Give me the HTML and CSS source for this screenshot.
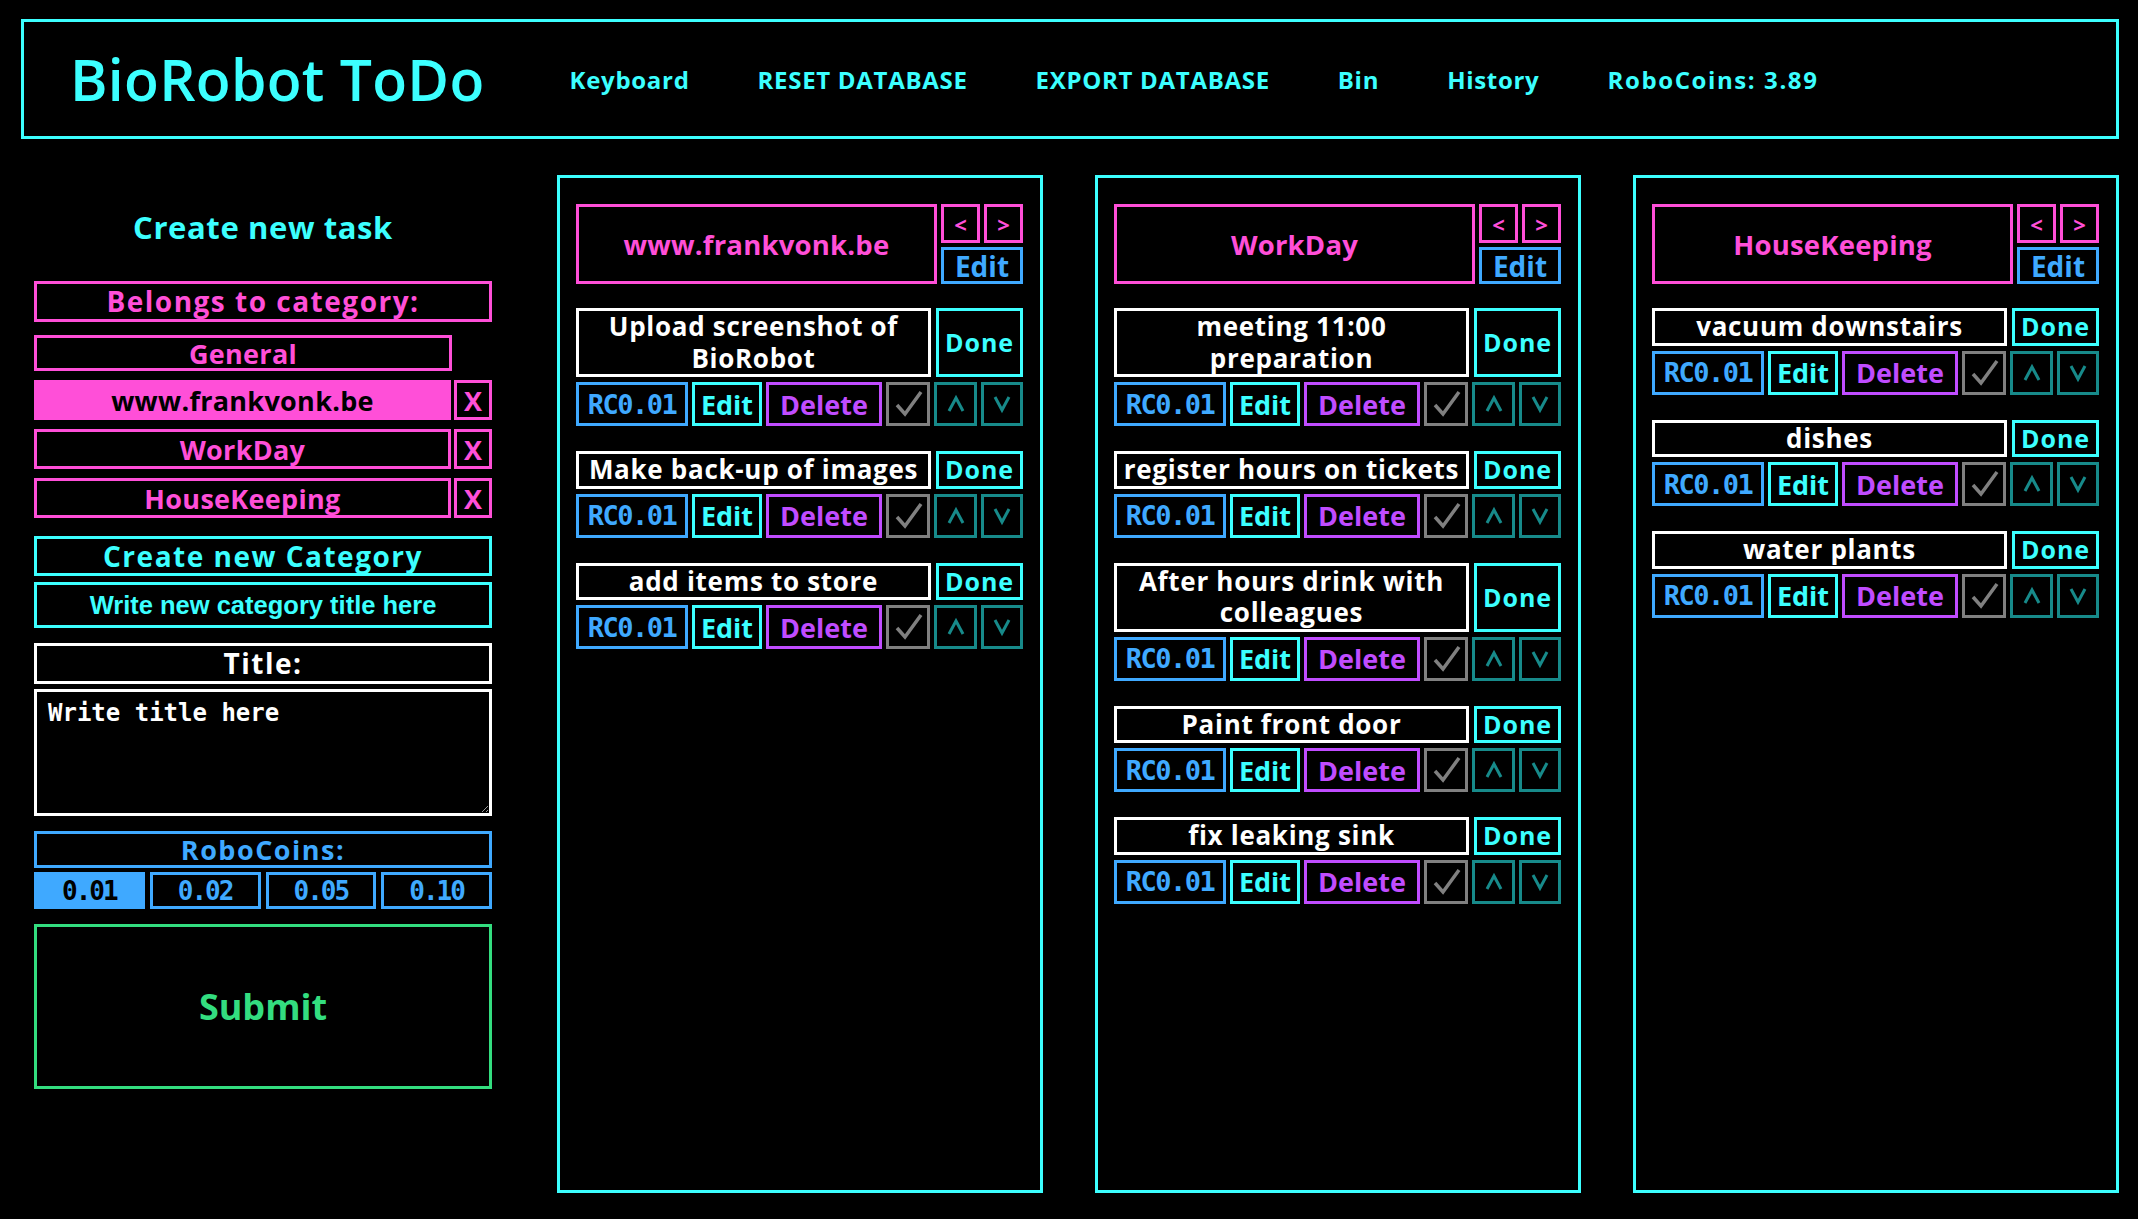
FILE: index.html
```html
<!DOCTYPE html>
<html lang="en">
<head>
  <meta charset="UTF-8">
  <meta name="viewport" content="width=device-width, initial-scale=1.0">
  <title>BioRobot ToDo</title>
  <link rel="stylesheet" href="styles.css">
</head>
<body>
  <header class="topbar">
    <h1 class="logo">BioRobot ToDo</h1>
    <nav class="menu">
      <a href="#">Keyboard</a>
      <a href="#">RESET DATABASE</a>
      <a href="#">EXPORT DATABASE</a>
      <a href="#">Bin</a>
      <a href="#">History</a>
      <a href="#" class="coinTotal">RoboCoins: 3.89</a>
    </nav>
  </header>

  <main class="board">
    <aside class="sidebar">
      <h2 class="sidebarTitle">Create new task</h2>
      <div class="boxLabel pink">Belongs to category:</div>

      <div class="catList">
        <div class="catRow general">
          <button class="catBtn">General</button>
        </div>
        <div class="catRow">
          <button class="catBtn selected">www.frankvonk.be</button>
          <button class="catX">X</button>
        </div>
        <div class="catRow">
          <button class="catBtn">WorkDay</button>
          <button class="catX">X</button>
        </div>
        <div class="catRow">
          <button class="catBtn">HouseKeeping</button>
          <button class="catX">X</button>
        </div>
      </div>

      <button class="boxLabel cyan newCat">Create new Category</button>
      <input type="text" class="catInput" placeholder="Write new category title here">

      <div class="boxLabel white titleLabel">Title:</div>
      <textarea class="titleInput" placeholder="Write title here"></textarea>

      <div class="boxLabel blue coinLabel">RoboCoins:</div>
      <div class="coins">
        <button class="coin selected">0.01</button>
        <button class="coin">0.02</button>
        <button class="coin">0.05</button>
        <button class="coin">0.10</button>
      </div>

      <button class="submit">Submit</button>
    </aside>

    <!-- category 1 -->
    <section class="column">
      <div class="colHead">
        <div class="colTitle">www.frankvonk.be</div>
        <div class="colCtrl">
          <button class="arrow">&lt;</button>
          <button class="arrow">&gt;</button>
          <button class="colEdit">Edit</button>
        </div>
      </div>

      <div class="task">
        <div class="taskTop">
          <div class="taskTitle">Upload screenshot of BioRobot</div>
          <button class="done">Done</button>
        </div>
        <div class="taskActions">
          <button class="rc">RC0.01</button>
          <button class="edit">Edit</button>
          <button class="delete">Delete</button>
          <button class="check"><svg viewBox="0 0 38 38"><polyline points="8,20 16,29 32,7"/></svg></button>
          <button class="move up"><svg viewBox="0 0 37 38"><polyline points="12,26 19,13 26,26"/></svg></button>
          <button class="move down"><svg viewBox="0 0 34 38"><polyline points="10,12 17,25 24,12"/></svg></button>
        </div>
      </div>

      <div class="task">
        <div class="taskTop">
          <div class="taskTitle">Make back-up of images</div>
          <button class="done">Done</button>
        </div>
        <div class="taskActions">
          <button class="rc">RC0.01</button>
          <button class="edit">Edit</button>
          <button class="delete">Delete</button>
          <button class="check"><svg viewBox="0 0 38 38"><polyline points="8,20 16,29 32,7"/></svg></button>
          <button class="move up"><svg viewBox="0 0 37 38"><polyline points="12,26 19,13 26,26"/></svg></button>
          <button class="move down"><svg viewBox="0 0 34 38"><polyline points="10,12 17,25 24,12"/></svg></button>
        </div>
      </div>

      <div class="task">
        <div class="taskTop">
          <div class="taskTitle">add items to store</div>
          <button class="done">Done</button>
        </div>
        <div class="taskActions">
          <button class="rc">RC0.01</button>
          <button class="edit">Edit</button>
          <button class="delete">Delete</button>
          <button class="check"><svg viewBox="0 0 38 38"><polyline points="8,20 16,29 32,7"/></svg></button>
          <button class="move up"><svg viewBox="0 0 37 38"><polyline points="12,26 19,13 26,26"/></svg></button>
          <button class="move down"><svg viewBox="0 0 34 38"><polyline points="10,12 17,25 24,12"/></svg></button>
        </div>
      </div>
    </section>

    <!-- category 2 -->
    <section class="column">
      <div class="colHead">
        <div class="colTitle">WorkDay</div>
        <div class="colCtrl">
          <button class="arrow">&lt;</button>
          <button class="arrow">&gt;</button>
          <button class="colEdit">Edit</button>
        </div>
      </div>

      <div class="task">
        <div class="taskTop">
          <div class="taskTitle">meeting 11:00 preparation</div>
          <button class="done">Done</button>
        </div>
        <div class="taskActions">
          <button class="rc">RC0.01</button>
          <button class="edit">Edit</button>
          <button class="delete">Delete</button>
          <button class="check"><svg viewBox="0 0 38 38"><polyline points="8,20 16,29 32,7"/></svg></button>
          <button class="move up"><svg viewBox="0 0 37 38"><polyline points="12,26 19,13 26,26"/></svg></button>
          <button class="move down"><svg viewBox="0 0 34 38"><polyline points="10,12 17,25 24,12"/></svg></button>
        </div>
      </div>

      <div class="task">
        <div class="taskTop">
          <div class="taskTitle">register hours on tickets</div>
          <button class="done">Done</button>
        </div>
        <div class="taskActions">
          <button class="rc">RC0.01</button>
          <button class="edit">Edit</button>
          <button class="delete">Delete</button>
          <button class="check"><svg viewBox="0 0 38 38"><polyline points="8,20 16,29 32,7"/></svg></button>
          <button class="move up"><svg viewBox="0 0 37 38"><polyline points="12,26 19,13 26,26"/></svg></button>
          <button class="move down"><svg viewBox="0 0 34 38"><polyline points="10,12 17,25 24,12"/></svg></button>
        </div>
      </div>

      <div class="task">
        <div class="taskTop">
          <div class="taskTitle">After hours drink with colleagues</div>
          <button class="done">Done</button>
        </div>
        <div class="taskActions">
          <button class="rc">RC0.01</button>
          <button class="edit">Edit</button>
          <button class="delete">Delete</button>
          <button class="check"><svg viewBox="0 0 38 38"><polyline points="8,20 16,29 32,7"/></svg></button>
          <button class="move up"><svg viewBox="0 0 37 38"><polyline points="12,26 19,13 26,26"/></svg></button>
          <button class="move down"><svg viewBox="0 0 34 38"><polyline points="10,12 17,25 24,12"/></svg></button>
        </div>
      </div>

      <div class="task">
        <div class="taskTop">
          <div class="taskTitle">Paint front door</div>
          <button class="done">Done</button>
        </div>
        <div class="taskActions">
          <button class="rc">RC0.01</button>
          <button class="edit">Edit</button>
          <button class="delete">Delete</button>
          <button class="check"><svg viewBox="0 0 38 38"><polyline points="8,20 16,29 32,7"/></svg></button>
          <button class="move up"><svg viewBox="0 0 37 38"><polyline points="12,26 19,13 26,26"/></svg></button>
          <button class="move down"><svg viewBox="0 0 34 38"><polyline points="10,12 17,25 24,12"/></svg></button>
        </div>
      </div>

      <div class="task">
        <div class="taskTop">
          <div class="taskTitle">fix leaking sink</div>
          <button class="done">Done</button>
        </div>
        <div class="taskActions">
          <button class="rc">RC0.01</button>
          <button class="edit">Edit</button>
          <button class="delete">Delete</button>
          <button class="check"><svg viewBox="0 0 38 38"><polyline points="8,20 16,29 32,7"/></svg></button>
          <button class="move up"><svg viewBox="0 0 37 38"><polyline points="12,26 19,13 26,26"/></svg></button>
          <button class="move down"><svg viewBox="0 0 34 38"><polyline points="10,12 17,25 24,12"/></svg></button>
        </div>
      </div>
    </section>

    <!-- category 3 -->
    <section class="column">
      <div class="colHead">
        <div class="colTitle">HouseKeeping</div>
        <div class="colCtrl">
          <button class="arrow">&lt;</button>
          <button class="arrow">&gt;</button>
          <button class="colEdit">Edit</button>
        </div>
      </div>

      <div class="task">
        <div class="taskTop">
          <div class="taskTitle">vacuum downstairs</div>
          <button class="done">Done</button>
        </div>
        <div class="taskActions">
          <button class="rc">RC0.01</button>
          <button class="edit">Edit</button>
          <button class="delete">Delete</button>
          <button class="check"><svg viewBox="0 0 38 38"><polyline points="8,20 16,29 32,7"/></svg></button>
          <button class="move up"><svg viewBox="0 0 37 38"><polyline points="12,26 19,13 26,26"/></svg></button>
          <button class="move down"><svg viewBox="0 0 34 38"><polyline points="10,12 17,25 24,12"/></svg></button>
        </div>
      </div>

      <div class="task">
        <div class="taskTop">
          <div class="taskTitle">dishes</div>
          <button class="done">Done</button>
        </div>
        <div class="taskActions">
          <button class="rc">RC0.01</button>
          <button class="edit">Edit</button>
          <button class="delete">Delete</button>
          <button class="check"><svg viewBox="0 0 38 38"><polyline points="8,20 16,29 32,7"/></svg></button>
          <button class="move up"><svg viewBox="0 0 37 38"><polyline points="12,26 19,13 26,26"/></svg></button>
          <button class="move down"><svg viewBox="0 0 34 38"><polyline points="10,12 17,25 24,12"/></svg></button>
        </div>
      </div>

      <div class="task">
        <div class="taskTop">
          <div class="taskTitle">water plants</div>
          <button class="done">Done</button>
        </div>
        <div class="taskActions">
          <button class="rc">RC0.01</button>
          <button class="edit">Edit</button>
          <button class="delete">Delete</button>
          <button class="check"><svg viewBox="0 0 38 38"><polyline points="8,20 16,29 32,7"/></svg></button>
          <button class="move up"><svg viewBox="0 0 37 38"><polyline points="12,26 19,13 26,26"/></svg></button>
          <button class="move down"><svg viewBox="0 0 34 38"><polyline points="10,12 17,25 24,12"/></svg></button>
        </div>
      </div>
    </section>
  </main>
</body>
</html>
```

FILE: styles.css
```css
* {
  box-sizing: border-box;
}

html {
  background-color: #000;
}

body {
  margin: 0;
  padding: 19px 19px 26px 21px;
  background-color: #000;
  color: #fff;
  font-family: "Open Sans", "Noto Sans", sans-serif;
}

button {
  font: inherit;
  color: inherit;
  background-color: #000;
  border: 3px solid;
  margin: 0;
  padding: 0;
  cursor: pointer;
}

/* top bar */
.topbar {
  height: 120px;
  border: 3px solid #3cffff;
  display: flex;
  align-items: center;
  padding-left: 46px;
  color: #3cffff;
}
.logo {
  margin: 0;
  font-size: 57px;
  font-weight: 600;
  letter-spacing: 0.3px;
}
.menu {
  display: flex;
  gap: 68px;
  margin-left: 85px;
  font-size: 24px;
  font-weight: 700;
  letter-spacing: 0.7px;
}
.menu a {
  color: #3cffff;
  text-decoration: none;
}
.menu .coinTotal {
  letter-spacing: 1.6px;
}

/* layout */
.board {
  display: flex;
  gap: 52px;
  margin-top: 36px;
}

/* left side: new task form */
.sidebar {
  width: 458px;
  margin-left: 13px;
  margin-right: 13px;
  padding-top: 32px;
  display: flex;
  flex-direction: column;
}
.sidebarTitle {
  margin: 0 0 34px;
  height: 40px;
  line-height: 40px;
  text-align: center;
  color: #3cffff;
  font-size: 31px;
  font-weight: 700;
  letter-spacing: 0.6px;
}
.boxLabel {
  height: 41px;
  border: 3px solid;
  line-height: 35px;
  text-align: center;
  font-size: 28px;
  font-weight: 700;
  letter-spacing: 1.5px;
}
.pink {
  color: #ff4fd8;
  border-color: #ff4fd8;
}
.cyan {
  color: #3cffff;
  border-color: #3cffff;
}
.white {
  color: #fff;
  border-color: #fff;
}
.blue {
  color: #3fa9ff;
  border-color: #3fa9ff;
}

.catList {
  display: flex;
  flex-direction: column;
  gap: 9px;
  margin-top: 13px;
}
.catRow {
  display: flex;
  gap: 3px;
  height: 40px;
}
.catRow.general {
  height: 36px;
  padding-right: 40px;
}
.catBtn {
  flex: 1;
  color: #ff4fd8;
  border-color: #ff4fd8;
  font-size: 27px;
  font-weight: 700;
  line-height: 1;
  letter-spacing: 0.3px;
}
.catBtn.selected {
  background-color: #ff4fd8;
  color: #000;
}
.catX {
  width: 38px;
  color: #ff4fd8;
  border-color: #ff4fd8;
  font-size: 27px;
  font-weight: 700;
  line-height: 1;
}

.newCat {
  margin-top: 18px;
  height: 40px;
  line-height: 34px;
  background-color: #000;
}
.catInput {
  margin-top: 6px;
  height: 46px;
  width: 100%;
  border: 3px solid #3cffff;
  background-color: #000;
  color: #3cffff;
  text-align: center;
  font-family: "Liberation Sans", Arial, sans-serif;
  font-size: 25.5px;
  font-weight: 700;
  outline: none;
}
.catInput::placeholder {
  color: #3cffff;
  opacity: 1;
}

.titleLabel {
  margin-top: 15px;
}
.titleInput {
  margin-top: 5px;
  height: 127px;
  width: 100%;
  border: 3px solid #fff;
  background-color: #000;
  color: #fff;
  padding: 7px 11px;
  font-family: "DejaVu Sans Mono", monospace;
  font-size: 24px;
  font-weight: 700;
  outline: none;
}
.titleInput::placeholder {
  color: #fff;
  opacity: 1;
}

.coinLabel {
  margin-top: 15px;
  height: 37px;
  line-height: 31px;
  font-size: 27px;
}
.coins {
  display: flex;
  gap: 5px;
  margin-top: 4px;
  height: 37px;
}
.coin {
  flex: 1;
  color: #3fa9ff;
  border-color: #3fa9ff;
  font-family: "DejaVu Sans Mono", monospace;
  font-size: 26px;
  font-weight: 700;
  line-height: 1;
  letter-spacing: -2px;
}
.coin.selected {
  background-color: #3fa9ff;
  color: #000;
}

.submit {
  margin-top: 15px;
  height: 165px;
  color: #33dd7f;
  border-color: #33dd7f;
  font-size: 36px;
  font-weight: 700;
}

/* category columns */
.column {
  width: 486px;
  height: 1018px;
  border: 3px solid #3cffff;
  padding: 26px 17px 0 16px;
}
.colHead {
  display: flex;
  gap: 4px;
  height: 80px;
}
.colTitle {
  flex: 1;
  border: 3px solid #ff4fd8;
  color: #ff4fd8;
  display: flex;
  align-items: center;
  justify-content: center;
  font-size: 27.5px;
  font-weight: 700;
  letter-spacing: 0.2px;
}
.colCtrl {
  width: 82px;
  display: grid;
  grid-template-columns: 1fr 1fr;
  grid-template-rows: 39px 37px;
  gap: 4px;
}
.arrow {
  color: #ff4fd8;
  border-color: #ff4fd8;
  font-size: 22px;
  font-weight: 700;
  line-height: 1;
}
.colEdit {
  grid-column: 1 / 3;
  color: #3fa9ff;
  border-color: #3fa9ff;
  font-size: 28px;
  font-weight: 700;
  line-height: 1;
}

.task {
  margin-top: 24px;
}
.task + .task {
  margin-top: 25px;
}
.taskTop {
  display: flex;
  gap: 5px;
}
.taskTitle {
  flex: 1;
  border: 3px solid #fff;
  padding: 0;
  text-align: center;
  font-size: 26px;
  font-weight: 700;
  line-height: 31.5px;
  letter-spacing: 0.7px;
}
.done {
  width: 87px;
  color: #3cffff;
  border-color: #3cffff;
  font-size: 25px;
  font-weight: 700;
  line-height: 1;
  letter-spacing: 1px;
}
.taskActions {
  display: flex;
  gap: 4px;
  height: 44px;
  margin-top: 5px;
  font-size: 27px;
  font-weight: 700;
  letter-spacing: 1px;
}
.taskActions button {
  line-height: 1;
}
.rc {
  width: 112px;
  color: #3fa9ff;
  border-color: #3fa9ff;
  font-family: "DejaVu Sans Mono", monospace;
  font-size: 27px;
  letter-spacing: -1.5px;
}
.edit {
  width: 70px;
  color: #3cffff;
  border-color: #3cffff;
}
.delete {
  width: 116px;
  color: #c04cff;
  border-color: #c04cff;
}
.check {
  width: 44px;
  border-color: #808080;
}
.move {
  border-color: #178a8a;
}
.move.up {
  width: 43px;
}
.move.down {
  flex: 1;
}
.taskActions svg {
  display: block;
  width: 100%;
  height: 100%;
  fill: none;
  stroke-width: 3;
}
.check svg {
  stroke: #808080;
  stroke-width: 3.5;
}
.move svg {
  stroke: #178a8a;
}
```
